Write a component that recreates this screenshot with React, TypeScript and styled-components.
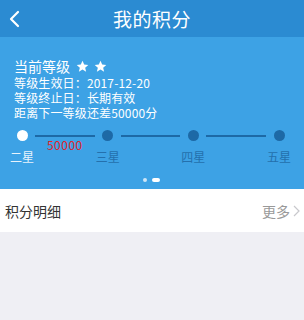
import React from "react";
import styled, { createGlobalStyle } from "styled-components";

const Global = createGlobalStyle`
  html, body { margin: 0; padding: 0; background: #efeff4; }
  body { font-family: "Noto Sans CJK SC", "Noto Sans", sans-serif; }
  * { box-sizing: border-box; }
`;

const Page = styled.div`
  width: 304px;
  height: 320px;
  background: #efeff4;
  display: flex;
  flex-direction: column;
`;

const Header = styled.header`
  height: 37px;
  background: #2b8bd2;
  display: grid;
  grid-template-columns: 40px 1fr 40px;
  align-items: center;
`;

const BackBtn = styled.div`
  display: flex;
  align-items: center;
  padding-left: 9px;
  height: 100%;
`;

const Title = styled.h1`
  margin: 0;
  text-align: center;
  color: #fff;
  font-size: 19px;
  font-weight: 400;
  letter-spacing: 0.5px;
  line-height: 37px;
`;

const Panel = styled.section`
  background: #3da2e5;
  padding: 20px 0 7px;
  display: flex;
  flex-direction: column;
`;

const Info = styled.div`
  padding-left: 14px;
  color: #fff;
`;

const LevelLine = styled.div`
  display: flex;
  align-items: center;
  font-size: 14px;
  line-height: 18px;
  gap: 6px;
`;

const Stars = styled.span`
  display: flex;
  gap: 5px;
`;

const InfoLine = styled.div`
  font-size: 12px;
  line-height: 15px;
  letter-spacing: 0.15px;
`;

const Track = styled.div`
  display: flex;
  align-items: flex-start;
  padding: 10px 13px 0 10px;
`;

const Step = styled.div`
  width: 24px;
  display: flex;
  flex-direction: column;
  align-items: center;
`;

const Dot = styled.div<{ $active?: boolean }>`
  width: 11px;
  height: 11px;
  border-radius: 50%;
  background: ${(p) => (p.$active ? "#ffffff" : "#1d69a6")};
`;

const StepLabel = styled.div<{ $active?: boolean }>`
  margin-top: 8px;
  font-size: 12px;
  line-height: 16px;
  white-space: nowrap;
  color: ${(p) => (p.$active ? "#e8f3fc" : "#2470ad")};
`;

const Connector = styled.div`
  flex: 1;
  display: flex;
  flex-direction: column;
  align-items: center;
  padding: 0 1px;
`;

const Line = styled.div`
  align-self: stretch;
  height: 2px;
  margin-top: 4.5px;
  background: #1d69a6;
`;

const Gap = styled.div`
  color: #e2222a;
  font-size: 12px;
  line-height: 14px;
  margin-top: 1px;
  letter-spacing: 0.5px;
`;

const Pager = styled.div`
  display: flex;
  justify-content: center;
  align-items: center;
  gap: 5px;
  margin-top: 13px;
  padding-right: 1px;
`;

const PagerDot = styled.span<{ $active?: boolean }>`
  height: 4px;
  width: ${(p) => (p.$active ? "8px" : "4px")};
  border-radius: 2px;
  background: ${(p) => (p.$active ? "#ffffff" : "#cde5f7")};
`;

const Row = styled.div`
  height: 43px;
  background: #fff;
  display: flex;
  align-items: center;
  justify-content: space-between;
  padding: 0 4px 0 5px;
`;

const RowTitle = styled.span`
  font-size: 14px;
  color: #333;
`;

const More = styled.span`
  display: flex;
  align-items: center;
  gap: 3px;
  font-size: 14px;
  color: #999;
`;

const Star = () => (
  <svg width="13" height="13" viewBox="0 0 24 24">
    <path
      d="M12 1.5l3.1 7 7.6.7-5.8 5 1.8 7.4L12 17.7l-6.7 3.9 1.8-7.4-5.8-5 7.6-.7z"
      fill="#fff"
    />
  </svg>
);

const levels = ["二星", "三星", "四星", "五星"];

export default function App() {
  return (
    <Page>
      <Global />
      <Header>
        <BackBtn>
          <svg width="11" height="18" viewBox="0 0 11 18">
            <path d="M9 2L2 9l7 7" stroke="#fff" strokeWidth="2.2" fill="none" strokeLinecap="round" strokeLinejoin="round" />
          </svg>
        </BackBtn>
        <Title>我的积分</Title>
        <div />
      </Header>
      <Panel>
        <Info>
          <LevelLine>
            当前等级
            <Stars>
              <Star />
              <Star />
            </Stars>
          </LevelLine>
          <InfoLine>等级生效日：2017-12-20</InfoLine>
          <InfoLine>等级终止日：长期有效</InfoLine>
          <InfoLine>距离下一等级还差50000分</InfoLine>
        </Info>
        <Track>
          {levels.map((l, i) => (
            <React.Fragment key={l}>
              {i > 0 && (
                <Connector>
                  <Line />
                  {i === 1 && <Gap>50000</Gap>}
                </Connector>
              )}
              <Step>
                <Dot $active={i === 0} />
                <StepLabel $active={i === 0}>{l}</StepLabel>
              </Step>
            </React.Fragment>
          ))}
        </Track>
        <Pager>
          <PagerDot />
          <PagerDot $active />
        </Pager>
      </Panel>
      <Row>
        <RowTitle>积分明细</RowTitle>
        <More>
          更多
          <svg width="7" height="12" viewBox="0 0 7 12">
            <path d="M1 1l5 5-5 5" stroke="#c8c8cc" strokeWidth="1.2" fill="none" />
          </svg>
        </More>
      </Row>
    </Page>
  );
}
